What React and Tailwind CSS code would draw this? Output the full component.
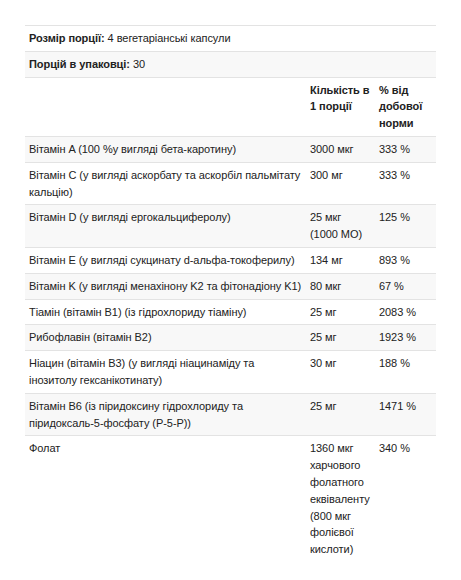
const ROWS = [
  ["Вітамін A (100 %у вигляді бета-каротину)", "3000 мкг", "333 %"],
  ["Вітамін C (у вигляді аскорбату та аскорбіл пальмітату кальцію)", "300 мг", "333 %"],
  ["Вітамін D (у вигляді ергокальциферолу)", "25 мкг (1000 МО)", "125 %"],
  ["Вітамін E (у вигляді сукцинату d-альфа-токоферилу)", "134 мг", "893 %"],
  ["Вітамін K (у вигляді менахінону K2 та фітонадіону K1)", "80 мкг", "67 %"],
  ["Тіамін (вітамін B1) (із гідрохлориду тіаміну)", "25 мг", "2083 %"],
  ["Рибофлавін (вітамін B2)", "25 мг", "1923 %"],
  ["Ніацин (вітамін B3) (у вигляді ніацинаміду та інозитолу гексанікотинату)", "30 мг", "188 %"],
  ["Вітамін B6 (із піридоксину гідрохлориду та піридоксаль-5-фосфату (P-5-P))", "25 мг", "1471 %"],
  ["Фолат", "1360 мкг харчового фолатного еквіваленту (800 мкг фолієвої кислоти)", "340 %"],
];

export default function App() {
  return (
    <div className="bg-white min-h-[580px] px-[25px] pt-[25px] font-['Liberation_Sans',Arial,sans-serif] text-[11px] leading-[16.8px] tracking-[-0.06px] text-[#222]">
      <table className="w-[411px] table-fixed border-collapse">
        <colgroup>
          <col className="w-[281px]" />
          <col className="w-[69px]" />
          <col className="w-[61px]" />
        </colgroup>
        <tbody>
          <tr className="border-t border-[#e3e3e3]">
            <td colSpan={3} className="px-[4px] py-[4px]">
              <b>Розмір порції:</b> 4 вегетаріанські капсули
            </td>
          </tr>
          <tr className="border-t border-[#e3e3e3] bg-[#f8f8f8]">
            <td colSpan={3} className="px-[4px] py-[4px]">
              <b>Порцій в упаковці:</b> 30
            </td>
          </tr>
          <tr className="border-t border-[#e3e3e3] font-bold">
            <td className="px-[4px] py-[4px]" />
            <td className="px-[4px] py-[4px] align-top">Кількість в 1 порції</td>
            <td className="px-[4px] py-[4px] align-top">% від добової норми</td>
          </tr>
          {ROWS.map(([name, amount, dv], i) => (
            <tr
              key={name}
              className={`border-t border-[#e3e3e3] ${i % 2 === 0 ? "bg-[#f8f8f8]" : "bg-white"}`}
            >
              <td className="pl-[4px] pr-[2px] py-[4px] align-top">{name}</td>
              <td className="px-[4px] py-[4px] align-top">{amount}</td>
              <td className="px-[4px] py-[4px] align-top">{dv}</td>
            </tr>
          ))}
        </tbody>
      </table>
    </div>
  );
}
